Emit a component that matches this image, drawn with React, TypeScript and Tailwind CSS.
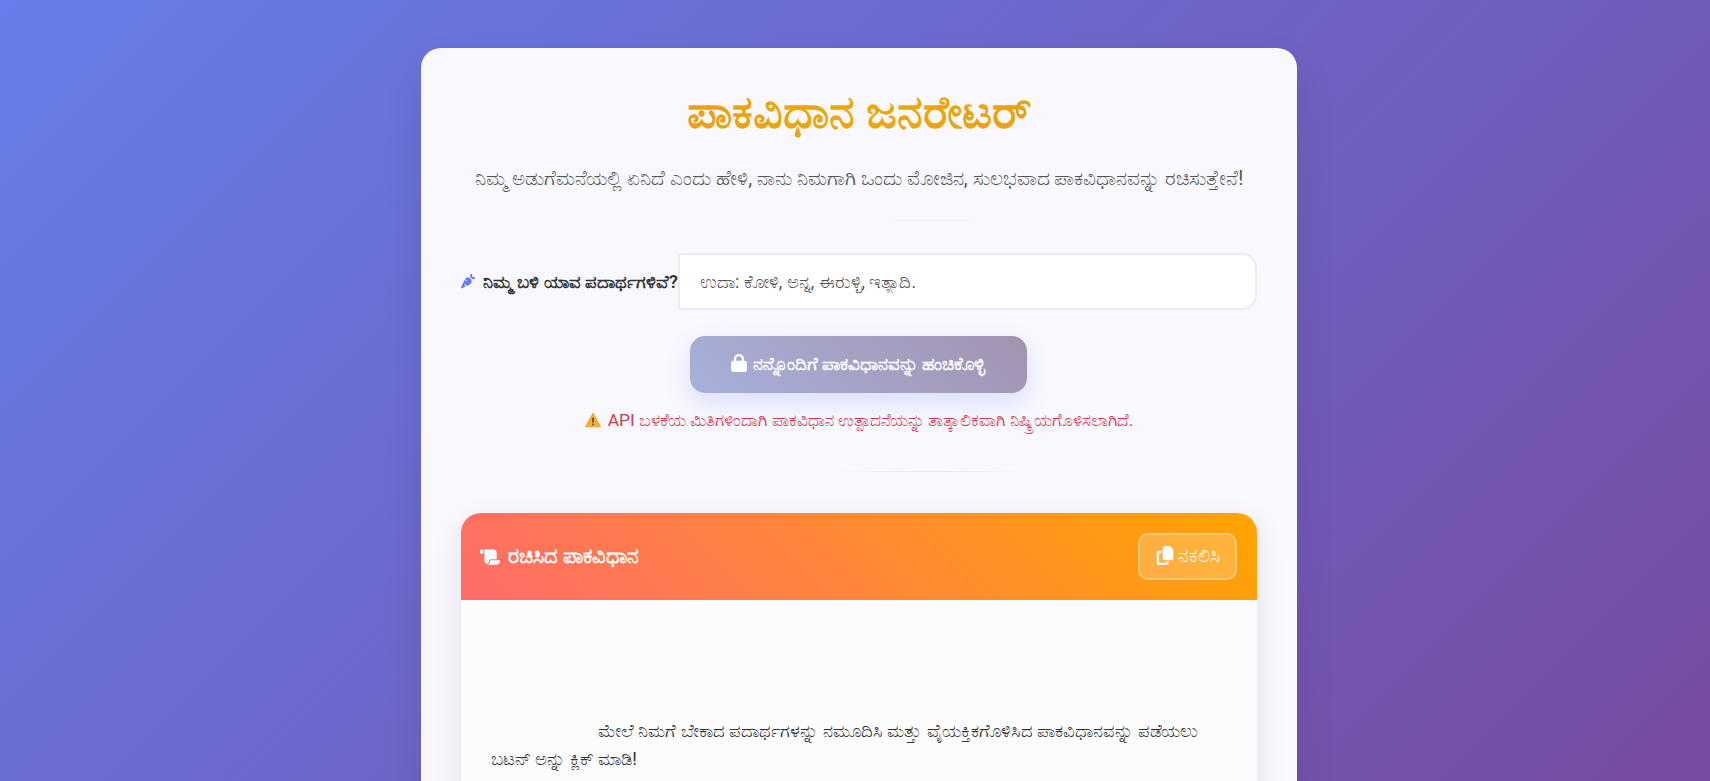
import React from "react";
import { FaCarrot, FaCopy, FaLock, FaScroll } from "react-icons/fa6";

function WarningIcon() {
  return (
    <svg viewBox="0 0 16 16" className="w-[16px] h-[16px] shrink-0">
      <path d="M8 1.2 15.6 14.8H.4Z" fill="#f5b133" stroke="#e89b1c" strokeWidth="0.8" strokeLinejoin="round" />
      <rect x="7.2" y="5.6" width="1.6" height="5" rx="0.7" fill="#5b4a2a" />
      <circle cx="8" cy="12.4" r="0.95" fill="#5b4a2a" />
    </svg>
  );
}

export default function App() {
  return (
    <div className="h-screen overflow-hidden bg-[linear-gradient(135deg,#667eea_0%,#764ba2_100%)] font-['Roboto',sans-serif] pl-2 pt-12 flex justify-center">
      <div className="w-[876px] shrink-0 h-[1000px] bg-[#f8f8fe] rounded-t-[20px] px-[40px] pt-[37px] shadow-[0_20px_40px_rgba(0,0,0,0.1)]">
        {/* Header */}
        <div className="text-center">
          <h1 className="text-[46px] leading-[54px] font-bold bg-[linear-gradient(90deg,#ee9320,#eba90a_50%,#ee9320)] bg-clip-text text-transparent">
            ಪಾಕವಿಧಾನ ಜನರೇಟರ್
          </h1>
          <p className="mt-[27px] text-[19.8px] leading-[26px] text-[#555555] whitespace-nowrap">
            ನಿಮ್ಮ ಅಡುಗೆಮನೆಯಲ್ಲಿ ಏನಿದೆ ಎಂದು ಹೇಳಿ, ನಾನು ನಿಮಗಾಗಿ ಒಂದು ಮೋಜಿನ, ಸುಲಭವಾದ ಪಾಕವಿಧಾನವನ್ನು ರಚಿಸುತ್ತೇನೆ!
          </p>
        </div>
        <div className="mt-[28px] ml-[370px] w-[200px] h-px bg-[linear-gradient(90deg,transparent,#f1f1f8,transparent)]" />

        {/* Form */}
        <div className="mt-[32px] flex items-center">
          <label className="w-[217px] shrink-0 flex items-center gap-[8px] text-[18.2px] font-semibold text-[#333333] whitespace-nowrap">
            <FaCarrot className="w-[18px] h-[18px] text-[#667eea]" />
            ನಿಮ್ಮ ಬಳಿ ಯಾವ ಪದಾರ್ಥಗಳಿವೆ?
          </label>
          <input
            className="w-[579px] h-[57px] px-[20px] bg-white border-2 border-[#ececf2] rounded-r-[15px] rounded-l-[3px] text-[17.8px] outline-none placeholder:text-[#555555]"
            placeholder="ಉದಾ: ಕೋಳಿ, ಅನ್ನ, ಈರುಳ್ಳಿ, ಇತ್ಯಾದಿ."
            readOnly
          />
        </div>

        <div className="mt-[26px] flex justify-center">
          <button className="mr-[2px] w-[337px] h-[57px] rounded-[15px] bg-[linear-gradient(45deg,#a7b0da,#a393b0)] text-white text-[17.8px] font-semibold flex items-center justify-center gap-[6px] shadow-[0_10px_25px_rgba(102,126,234,0.2)]">
            <FaLock className="w-[16px] h-[18px] -mt-[4px]" />
            ನನ್ನೊಂದಿಗೆ ಪಾಕವಿಧಾನವನ್ನು ಹಂಚಿಕೊಳ್ಳಿ
          </button>
        </div>

        <p className="mt-[17px] flex items-center justify-center gap-[7px] text-[17.4px] leading-[20px] text-[#d13a52] whitespace-nowrap">
          <WarningIcon />
          API ಬಳಕೆಯ ಮಿತಿಗಳಿಂದಾಗಿ ಪಾಕವಿಧಾನ ಉತ್ಪಾದನೆಯನ್ನು ತಾತ್ಕಾಲಿಕವಾಗಿ ನಿಷ್ಕ್ರಿಯಗೊಳಿಸಲಾಗಿದೆ.
        </p>

        <div className="mt-[41px] ml-[370px] w-[200px] h-px bg-[linear-gradient(90deg,transparent,#e6e6f0,transparent)]" />

        {/* Result */}
        <div className="mt-[41px] rounded-t-[20px] bg-[#fcfcfd] shadow-[0_10px_30px_rgba(0,0,0,0.1)]">
          <div className="h-[87px] rounded-t-[20px] bg-[linear-gradient(45deg,#ff6b6b,#ffa500)] flex items-center justify-between pl-[19px] pr-[20px]">
            <h2 className="flex items-center gap-[8px] text-[20.8px] font-semibold text-white">
              <FaScroll className="w-[20px] h-[18px]" />
              ರಚಿಸಿದ ಪಾಕವಿಧಾನ
            </h2>
            <button className="w-[99px] h-[47px] rounded-[10px] bg-white/20 border-2 border-white/30 text-white text-[18.8px] flex items-center justify-center gap-[4px]">
              <FaCopy className="w-[18px] h-[19px] -mt-[3px]" />
              ನಕಲಿಸಿ
            </button>
          </div>
          <div className="px-[30px] pt-[117px] pb-[60px] text-[17.9px] leading-[28px] text-[#333333]">
            <p className="indent-[107px]">
              ಮೇಲೆ ನಿಮಗೆ ಬೇಕಾದ ಪದಾರ್ಥಗಳನ್ನು ನಮೂದಿಸಿ ಮತ್ತು ವೈಯಕ್ತಿಕಗೊಳಿಸಿದ ಪಾಕವಿಧಾನವನ್ನು ಪಡೆಯಲು ಬಟನ್ ಅನ್ನು ಕ್ಲಿಕ್ ಮಾಡಿ!
            </p>
          </div>
        </div>
      </div>
    </div>
  );
}
